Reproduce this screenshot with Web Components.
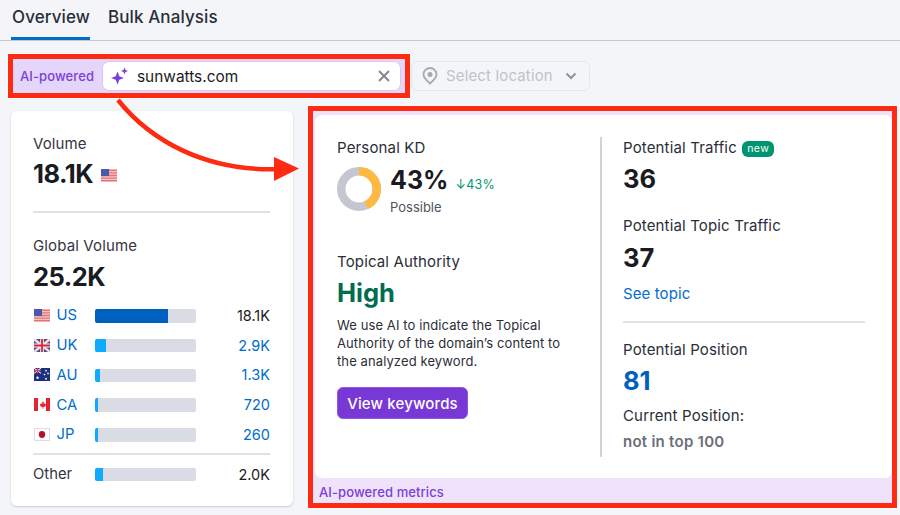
<!DOCTYPE html>
<html lang="en"><head><meta charset="utf-8"><title>Overview</title>
<style>
html,body{margin:0;padding:0;height:515px;overflow:hidden}
body{background:#f4f5f9;font-family:Inter,"Liberation Sans",sans-serif;color:#191b23;position:relative}
.main{display:flex;align-items:flex-start;gap:15px;padding-left:11px}
</style></head><body>
<tab-bar></tab-bar>
<tool-bar></tool-bar>
<div class="main">
<volume-card></volume-card>
<metrics-panel></metrics-panel>
</div>
<red-arrow></red-arrow>
<script>
function def(name, css, html){
  customElements.define(name, class extends HTMLElement{
    constructor(){super();const r=this.attachShadow({mode:'open'});r.innerHTML='<style>'+css+'</style>'+(typeof html==='function'?html(this):html);}
  });
}
const FLAGS={
us:`<rect width="16" height="12" fill="#f6c4c4"/><path d="M0 1.2h16M0 3.600h16M0 6h16M0 8.400h16M0 10.800h16" stroke="#e57373" stroke-width="1.200"/><rect width="8" height="6.500" fill="#4c58a9"/>`,
uk:`<rect width="16" height="12" fill="#46508f"/><path d="M0 0L16 12M16 0L0 12" stroke="#f2d9dc" stroke-width="2.400"/><path d="M8 0V12M0 6H16" stroke="#f4f0f0" stroke-width="3.600"/><path d="M8 0V12M0 6H16" stroke="#d8243a" stroke-width="1.800"/>`,
au:`<rect width="16" height="12" fill="#1e2f82"/><path d="M0 0L7 5M7 0L0 5" stroke="#e8e8f0" stroke-width="1"/><path d="M3.500 0V5M0 2.500H7" stroke="#e34" stroke-width="1"/><g fill="#fff"><circle cx="3.500" cy="9" r="1.200"/><circle cx="12" cy="2.500" r=".8"/><circle cx="14" cy="5" r=".8"/><circle cx="10.500" cy="6" r=".8"/><circle cx="12" cy="10" r=".9"/></g>`,
ca:`<rect width="16" height="12" fill="#fff"/><rect width="4" height="12" fill="#e5222f"/><rect x="12" width="4" height="12" fill="#e5222f"/><path d="M8 2.200l.9 1.600 1-.4-.3 2 1.400-.6.4.9 1-.1-.9 1.600.4.5-2.500.5.1 1.400h-1l.1-1.400-2.500-.5.4-.5-.9-1.600 1 .1.4-.9 1.400.6-.3-2 1 .4z" fill="#e5222f"/>`,
jp:`<rect x=".5" y=".5" width="15" height="11" fill="#fff" stroke="#dcdde2"/><circle cx="8" cy="6" r="3.200" fill="#b8102c"/>`};
def('flag-icon',':host{display:inline-flex;line-height:0}svg{display:block;width:16px;height:13px}',
  h=>`<svg viewBox="0 0 16 12" preserveAspectRatio="none" aria-hidden="true">${FLAGS[h.getAttribute('code')]}</svg>`);

def('tab-bar',`:host{display:flex;gap:17px;height:40px;border-bottom:1px solid #c4c7cf;padding-left:11px;font-size:17px;font-weight:500;letter-spacing:.1px}
.t{display:block;height:40px;line-height:35px;box-sizing:border-box;color:#2b2e38;padding-left:1px}
.a{border-bottom:3px solid #006dca}`,
`<span class="t a">Overview</span><span class="t">Bulk Analysis</span>`);

def('tool-bar',`:host{display:flex;align-items:center;margin:13px 0 8px 8px;height:44px}
.ai{display:flex;align-items:center;box-sizing:border-box;width:402px;height:44px;border:5px solid #ff2a12;background:#e6d5fb;padding:0 4px 0 7px;box-shadow:0 0 0 1px rgba(255,255,255,.55)}
.lab{color:#7b3fd9;font-size:13px;font-weight:500;width:82px;flex:none;letter-spacing:.1px}
.inp{flex:1;height:30px;background:#fff;border-radius:7px;display:flex;align-items:center;padding:0 11px 0 9px;font-size:15.400px;color:#191b23;box-shadow:inset 0 0 0 1px #d9c6f7}
.inp span{flex:1;margin-left:8px}
.spark{width:18px;height:18px;flex:none}
.x{width:12px;height:12px;flex:none}
.sel{margin-left:1px;width:179px;height:30px;box-sizing:border-box;border:1px solid #e6e7ec;border-radius:6px;background:#f4f5f9;display:flex;align-items:center;padding:0 12px 0 9px;color:#c0c2ca;font-size:14.900px;letter-spacing:.2px}
.sel span{flex:1;margin-left:7px}
.pin{width:18px;height:18px;flex:none}.chev{width:12px;height:8px;flex:none}`,
`<div class="ai"><span class="lab">AI-powered</span><div class="inp">
<svg class="spark" viewBox="0 0 18 18" fill="#7b3fd9"><path d="M6.500 4.500L8.300 9.200L13 11L8.300 12.800L6.500 17.500L4.700 12.800L0 11L4.700 9.200Z"/><path d="M13.500 .5L14.500 3L17 4L14.500 5L13.500 7.500L12.500 5L10 4L12.500 3Z"/></svg>
<span>sunwatts.com</span>
<svg class="x" viewBox="0 0 12 12" fill="none" stroke="#858993" stroke-width="2.100"><path d="M1 1L11 11M11 1L1 11"/></svg></div></div>
<div class="sel"><svg class="pin" viewBox="0 0 18 18" fill="none" stroke="#a6a9b1" stroke-width="1.800"><path d="M9 16.500C5.500 13.500 2.500 10.800 2.500 7.500A6.500 6.500 0 0 1 15.500 7.500C15.500 10.800 12.500 13.500 9 16.500Z"/><circle cx="9" cy="7.500" r="2.500" fill="#a6a9b1" stroke="none"/></svg>
<span>Select location</span>
<svg class="chev" viewBox="0 0 12 8" fill="none" stroke="#8f929b" stroke-width="2"><path d="M1.500 1.500L6 6L10.500 1.500"/></svg></div>`);

def('country-row',`:host{display:grid;grid-template-columns:16px 45px 101px 1fr;align-items:center;height:29.750px;margin-left:1px}
.n{padding-left:6.500px;color:#006dca;font-size:14.800px}
.bar{display:block;height:13.500px;margin-top:1px;background:#d9dce5;border-radius:2px;overflow:hidden;grid-column:3}
.fill{display:block;height:100%;background:var(--c,#0dabff)}
.v{text-align:right;color:#006dca;font-size:14.500px}
:host([dark]) .v{color:#191b23}
:host([plain]) .v{color:#191b23}:host([plain]) .n{color:#33363f;padding:0;margin-left:-1px;grid-column:1/3}`,
h=>{const p=h.hasAttribute('plain');const c=h.getAttribute('color');return `${p?'':`<flag-icon code="${h.getAttribute('code')}"></flag-icon>`}<span class="n">${h.getAttribute('name')}</span><span class="bar"><span class="fill" style="width:${h.getAttribute('pct')}%;${c?'--c:'+c:''}"></span></span><span class="v">${h.getAttribute('val')}</span>`});

def('volume-card',`:host{display:block;width:282px;height:395px;margin-top:5px;box-sizing:border-box;background:#fff;border-radius:6px;box-shadow:0 1px 2px rgba(25,27,35,.2);padding:22px 23px 0 22px}
.l{font-size:15px;line-height:22px;color:#33363f;letter-spacing:.13px}
.b{font-size:25.500px;font-weight:700;line-height:30px;letter-spacing:-.5px;margin-top:4px;display:flex;align-items:center;color:#191b23}
.b flag-icon{margin-left:8px;margin-top:2px}
hr{border:0;height:2px;background:#dfe1e8;margin:22px 0 22px}
hr.s{margin:4px 0 4px}
.rows{margin-top:8.500px}`,
`<div class="l">Volume</div><div class="b">18.1K<flag-icon code="us"></flag-icon></div><hr>
<div class="l">Global Volume</div><div class="b" style="margin-top:5px">25.2K</div>
<div class="rows">
<country-row dark code="us" name="US" pct="72" color="#0060bf" val="18.1K"></country-row>
<country-row code="uk" name="UK" pct="11" val="2.9K"></country-row>
<country-row code="au" name="AU" pct="5" val="1.3K"></country-row>
<country-row code="ca" name="CA" pct="3" val="720"></country-row>
<country-row code="jp" name="JP" pct="3" val="260"></country-row>
<hr class="s"><country-row plain name="Other" pct="8" val="2.0K"></country-row></div>`);

def('metrics-panel',`:host{display:block;flex:none;width:589px;height:402px;box-sizing:border-box;border:5px solid #ff2a12;background:#efe2fa;box-shadow:0 0 0 1px rgba(255,255,255,.55)}
.w{margin:4px 0 0 2px;height:363px;background:#fff;border-radius:7px;box-sizing:border-box;display:flex;padding:22px 0 0 22px}
.foot{color:#7b3fd9;font-size:13px;font-weight:500;line-height:24px;padding:2px 0 0 6px;height:25px;box-sizing:border-box;letter-spacing:.1px}
.c1{width:265px;flex:none;height:320px;box-sizing:border-box;border-right:2px solid #d0d3da;padding-top:1px}
.c2{padding:1px 0 0 21px;width:242px;flex:none}
.l{font-size:15px;line-height:20px;color:#2b2e38;letter-spacing:.15px}
.first{margin-bottom:1px}
.kd{display:flex;margin:9px 0 0 0}
.kd svg{width:44px;height:44px;flex:none;margin:0 9px 0 0}
.v{font-size:25.500px;font-weight:700;line-height:30px;color:#191b23}
.pc{display:flex;align-items:baseline;gap:7px;height:26px;line-height:26px}
.pc b{font-size:25px;font-weight:700}
.pc i{font-style:normal;color:#00966e;font-size:12.500px;letter-spacing:.3px;line-height:13px}
.poss{font-size:13px;color:#50535d;line-height:16px;margin-top:6px}
.high{font-size:25.500px;font-weight:700;line-height:30px;color:#006d4f;margin-top:6px}
p{font-size:13px;line-height:18px;margin:8px 0 0;color:#2b2e38;width:228px;letter-spacing:.1px}
button{display:block;margin-top:17px;width:131px;height:32px;border:1px solid #8d59e0;background:#7738d6;color:#fff;border-radius:6px;font:500 15px Inter,sans-serif;letter-spacing:.15px;padding:0}
.new{display:inline-block;background:#009470;color:#fff;font-size:10.500px;line-height:15.500px;height:15.500px;border-radius:6px;padding:0 5px;margin-left:1px;vertical-align:1px;letter-spacing:.4px;font-weight:400}
hr{border:0;height:2px;background:#dfe1e8;margin:17px 0 17px}
.link{color:#006dca;font-size:15px;line-height:20px;margin-top:11px;letter-spacing:.1px}
.blue{color:#0060bf}.gr{color:#6c6e79;font-size:15px;font-weight:600;line-height:20px;margin-top:5.500px;letter-spacing:.26px}`,
`<div class="w"><div class="c1">
<div class="l first">Personal KD</div>
<div class="kd"><svg viewBox="0 0 44 44"><circle cx="22" cy="22" r="17.750" fill="none" stroke="#c4c7cf" stroke-width="8.500"/><circle cx="22" cy="22" r="17.750" fill="none" stroke="#ffb940" stroke-width="8.500" stroke-dasharray="47.960 111.530" transform="rotate(-90 22 22)"/></svg>
<div><div class="pc"><b>43%</b><i>↓43%</i></div><div class="poss">Possible</div></div></div>
<div class="l" style="margin-top:37px">Topical Authority</div>
<div class="high">High</div>
<p>We use AI to indicate the Topical Authority of the domain’s content to the analyzed keyword.</p>
<button>View keywords</button>
</div><div class="c2">
<div class="l first">Potential Traffic <span class="new">new</span></div>
<div class="v" style="margin-top:6px">36</div>
<div class="l" style="margin-top:22px">Potential Topic Traffic</div>
<div class="v" style="margin-top:7px">37</div>
<div class="link">See topic</div>
<hr>
<div class="l">Potential Position</div>
<div class="v blue" style="margin-top:6px">81</div>
<div class="l" style="margin-top:10px">Current Position:</div>
<div class="gr">not in top 100</div>
</div></div><div class="foot">AI-powered metrics</div>`);

def('red-arrow',`:host{position:absolute;left:0;top:0;width:900px;height:515px;pointer-events:none}svg{display:block}`,
`<svg width="900" height="515" viewBox="0 0 900 515"><path d="M118 100C150 140 205 172 280 169" fill="none" stroke="#ff2a12" stroke-width="4.500"/><path d="M274 157L299 168.500L274 181Z" fill="#ff2a12"/></svg>`);
</script>
</body></html>
